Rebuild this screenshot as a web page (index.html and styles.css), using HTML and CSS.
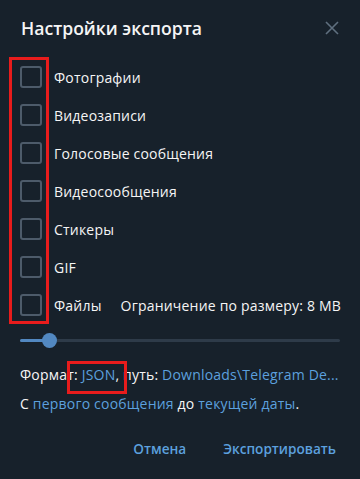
FILE: index.html
```html
<!DOCTYPE html>
<html lang="ru">
<head>
    <meta charset="UTF-8">
    <meta name="viewport" content="width=device-width, initial-scale=1.0">
    <title>Настройки экспорта</title>
    <link rel="stylesheet" href="styles.css">
</head>
<body>
    <div class="dialog">
        <div class="header">
            <h1>Настройки экспорта</h1>
            <button class="close" type="button" aria-label="Закрыть">
                <svg width="14" height="14" viewBox="0 0 14 14">
                    <path d="M1 1 L13 13 M13 1 L1 13" stroke="#5f6f7f" stroke-width="1.6" fill="none"/>
                </svg>
            </button>
        </div>

        <div class="options">
            <div class="highlight highlight-checks"></div>
            <label class="option"><span class="check"></span>Фотографии</label>
            <label class="option"><span class="check"></span>Видеозаписи</label>
            <label class="option"><span class="check"></span>Голосовые сообщения</label>
            <label class="option"><span class="check"></span>Видеосообщения</label>
            <label class="option"><span class="check"></span>Стикеры</label>
            <label class="option"><span class="check"></span>GIF</label>
            <label class="option"><span class="check"></span>Файлы<span class="limit">Ограничение по размеру: 8 MB</span></label>
        </div>

        <div class="slider">
            <div class="slider-fill"></div>
            <div class="slider-thumb"></div>
        </div>

        <p class="info info-format">Формат: <span class="format-wrap"><a href="#">JSON</a>,<span class="highlight highlight-format"></span></span> путь: <a href="#">Downloads\Telegram De...</a></p>
        <p class="info">С <a href="#">первого сообщения</a> до <a href="#">текущей даты</a>.</p>

        <div class="actions">
            <button type="button" class="action">Отмена</button>
            <button type="button" class="action">Экспортировать</button>
        </div>
    </div>
</body>
</html>
```

FILE: styles.css
```css
body {
    margin: 0;
    background-color: #17212b;
    font-family: "Open Sans", "Noto Sans", sans-serif;
    color: #f5f5f5;
    font-size: 14px;
    letter-spacing: 0.2px;
}

.dialog {
    width: 360px;
    height: 479px;
    box-sizing: border-box;
    padding: 0 20px;
}

.header {
    display: flex;
    justify-content: space-between;
    align-items: center;
    height: 56px;
}

.header h1 {
    margin: 0;
    font-size: 17.6px;
    font-weight: 600;
    letter-spacing: 0;
    padding-left: 1px;
}

.close {
    background: none;
    border: none;
    padding: 0;
    width: 14px;
    height: 14px;
    margin-right: 1px;
    cursor: pointer;
}

.options {
    position: relative;
    padding-top: 2px;
}

.option {
    display: flex;
    align-items: center;
    height: 38px;
    white-space: nowrap;
}

.check {
    flex-shrink: 0;
    width: 22px;
    height: 22px;
    box-sizing: border-box;
    border: 2px solid #4d5b6a;
    border-radius: 3px;
    margin-right: 12px;
}

.limit {
    margin-left: 19px;
}

.highlight {
    position: absolute;
    border: 3px solid #e81c1c;
    box-sizing: border-box;
}

.highlight-checks {
    left: -11px;
    top: 1px;
    width: 40px;
    height: 267px;
}

.slider {
    position: relative;
    height: 3px;
    margin-top: 15px;
    background-color: #2e3b49;
    border-radius: 2px;
}

.slider-fill {
    width: 29px;
    height: 3px;
    background-color: #5288c1;
    border-radius: 2px;
}

.slider-thumb {
    position: absolute;
    left: 22px;
    top: -6px;
    width: 15px;
    height: 15px;
    border-radius: 50%;
    background-color: #5288c1;
}

.info {
    margin: 0;
    line-height: 29px;
    white-space: nowrap;
}

.info-format {
    margin-top: 18px;
}

.info a {
    color: #5ca0de;
    text-decoration: none;
}

.format-wrap {
    position: relative;
}

.highlight-format {
    left: -15px;
    top: -4px;
    width: 60px;
    height: 33px;
}

.actions {
    display: flex;
    justify-content: flex-end;
    gap: 37px;
    margin-top: 21px;
    padding-right: 4px;
}

.action {
    background: none;
    border: none;
    padding: 0;
    font-family: inherit;
    font-size: 13.6px;
    font-weight: 600;
    letter-spacing: 0;
    color: #5ca0de;
    cursor: pointer;
}
```
